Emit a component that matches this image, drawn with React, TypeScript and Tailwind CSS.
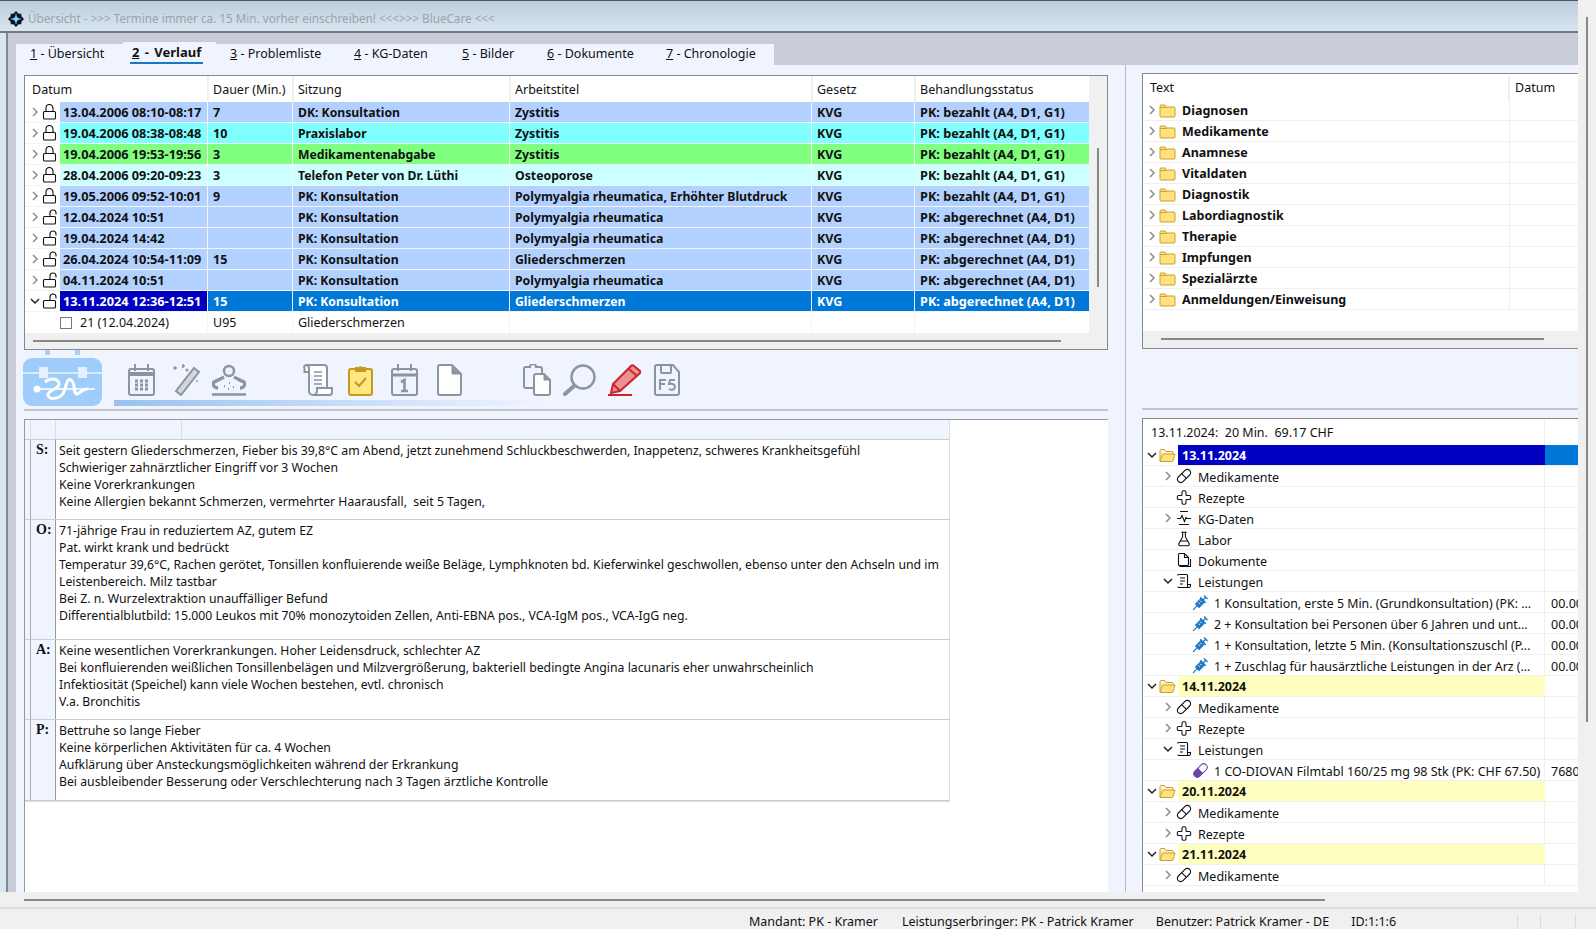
import { Pill, Cross, FlaskConical } from 'lucide-react';

const columns = ['w-[182px]', 'w-[85px]', 'w-[217px]', 'w-[302px]', 'w-[103px]', 'w-[175px]'];
const headers = ['Datum', 'Dauer (Min.)', 'Sitzung', 'Arbeitstitel', 'Gesetz', 'Behandlungsstatus'];
const cellText = ['', 'text-[12.5px]', 'text-[12.2px]', 'text-[12.25px]', 'text-[12.5px]', 'text-[12.7px]'];

const BLUE = 'bg-[#b3d1ff]';
const PAID = 'PK: bezahlt (A4, D1, G1)';
const BILLED = 'PK: abgerechnet (A4, D1)';

const visits = [
  { bg: BLUE, locked: true, cells: ['13.04.2006 08:10-08:17', '7', 'DK: Konsultation', 'Zystitis', 'KVG', PAID] },
  { bg: 'bg-[#80ffff]', locked: true, cells: ['19.04.2006 08:38-08:48', '10', 'Praxislabor', 'Zystitis', 'KVG', PAID] },
  { bg: 'bg-[#80ff80]', locked: true, cells: ['19.04.2006 19:53-19:56', '3', 'Medikamentenabgabe', 'Zystitis', 'KVG', PAID] },
  { bg: 'bg-[#ccffff]', locked: true, cells: ['28.04.2006 09:20-09:23', '3', 'Telefon Peter von Dr. Lüthi', 'Osteoporose', 'KVG', PAID] },
  { bg: BLUE, locked: true, cells: ['19.05.2006 09:52-10:01', '9', 'PK: Konsultation', 'Polymyalgia rheumatica, Erhöhter Blutdruck', 'KVG', PAID] },
  { bg: BLUE, locked: false, cells: ['12.04.2024 10:51', '', 'PK: Konsultation', 'Polymyalgia rheumatica', 'KVG', BILLED] },
  { bg: BLUE, locked: false, cells: ['19.04.2024 14:42', '', 'PK: Konsultation', 'Polymyalgia rheumatica', 'KVG', BILLED] },
  { bg: BLUE, locked: false, cells: ['26.04.2024 10:54-11:09', '15', 'PK: Konsultation', 'Gliederschmerzen', 'KVG', BILLED] },
  { bg: BLUE, locked: false, cells: ['04.11.2024 10:51', '', 'PK: Konsultation', 'Polymyalgia rheumatica', 'KVG', BILLED] },
];

const tabs = [
  { n: '1', label: 'Übersicht', cls: 'w-[107px] pl-[14px]' },
  { n: '2', label: 'Verlauf', cls: 'w-[93px] pl-[7px]', active: true },
  { n: '3', label: 'Problemliste', cls: 'w-[124px] pl-[14px]' },
  { n: '4', label: 'KG-Daten', cls: 'w-[108px] pl-[14px]' },
  { n: '5', label: 'Bilder', cls: 'w-[85px] pl-[14px]' },
  { n: '6', label: 'Dokumente', cls: 'w-[119px] pl-[14px]' },
  { n: '7', label: 'Chronologie', cls: 'w-[122px] pl-[14px]' },
];

const soap = [
  {
    label: 'S:',
    cls: 'h-[80px]',
    lines: [
      'Seit gestern Gliederschmerzen, Fieber bis 39,8°C am Abend, jetzt zunehmend Schluckbeschwerden, Inappetenz, schweres Krankheitsgefühl',
      'Schwieriger zahnärztlicher Eingriff vor 3 Wochen',
      'Keine Vorerkrankungen',
      'Keine Allergien bekannt Schmerzen, vermehrter Haarausfall,  seit 5 Tagen,',
    ],
  },
  {
    label: 'O:',
    cls: 'h-[120px]',
    lines: [
      '71-jährige Frau in reduziertem AZ, gutem EZ',
      'Pat. wirkt krank und bedrückt',
      'Temperatur 39,6°C, Rachen gerötet, Tonsillen konfluierende weiße Beläge, Lymphknoten bd. Kieferwinkel geschwollen, ebenso unter den Achseln und im',
      'Leistenbereich. Milz tastbar',
      'Bei Z. n. Wurzelextraktion unauffälliger Befund',
      'Differentialblutbild: 15.000 Leukos mit 70% monozytoiden Zellen, Anti-EBNA pos., VCA-IgM pos., VCA-IgG neg.',
    ],
  },
  {
    label: 'A:',
    cls: 'h-[80px]',
    lines: [
      'Keine wesentlichen Vorerkrankungen. Hoher Leidensdruck, schlechter AZ',
      'Bei konfluierenden weißlichen Tonsillenbelägen und Milzvergrößerung, bakteriell bedingte Angina lacunaris eher unwahrscheinlich',
      'Infektiosität (Speichel) kann viele Wochen bestehen, evtl. chronisch',
      'V.a. Bronchitis',
    ],
  },
  {
    label: 'P:',
    cls: 'h-[81px]',
    lines: [
      'Bettruhe so lange Fieber',
      'Keine körperlichen Aktivitäten für ca. 4 Wochen',
      'Aufklärung über Ansteckungsmöglichkeiten während der Erkrankung',
      'Bei ausbleibender Besserung oder Verschlechterung nach 3 Tagen ärztliche Kontrolle',
    ],
  },
];

const categories = ['Diagnosen', 'Medikamente', 'Anamnese', 'Vitaldaten', 'Diagnostik', 'Labordiagnostik', 'Therapie', 'Impfungen', 'Spezialärzte', 'Anmeldungen/Einweisung'];

type Node =
  | { kind: 'date'; label: string; selected?: boolean }
  | { kind: 'group'; label: string; icon: string; arrow?: 'right' | 'down' }
  | { kind: 'item'; label: string; value: string; capsule?: boolean };

const tree: Node[] = [
  { kind: 'date', label: '13.11.2024', selected: true },
  { kind: 'group', label: 'Medikamente', icon: 'pill', arrow: 'right' },
  { kind: 'group', label: 'Rezepte', icon: 'cross' },
  { kind: 'group', label: 'KG-Daten', icon: 'kg', arrow: 'right' },
  { kind: 'group', label: 'Labor', icon: 'flask' },
  { kind: 'group', label: 'Dokumente', icon: 'doc' },
  { kind: 'group', label: 'Leistungen', icon: 'list', arrow: 'down' },
  { kind: 'item', label: '1 Konsultation, erste 5 Min. (Grundkonsultation) (PK: ...', value: '00.00' },
  { kind: 'item', label: '2 + Konsultation bei Personen über 6 Jahren und unt...', value: '00.00' },
  { kind: 'item', label: '1 + Konsultation, letzte 5 Min. (Konsultationszuschl (P...', value: '00.00' },
  { kind: 'item', label: '1 + Zuschlag für hausärztliche Leistungen in der Arz (...', value: '00.00' },
  { kind: 'date', label: '14.11.2024' },
  { kind: 'group', label: 'Medikamente', icon: 'pill', arrow: 'right' },
  { kind: 'group', label: 'Rezepte', icon: 'cross', arrow: 'right' },
  { kind: 'group', label: 'Leistungen', icon: 'list', arrow: 'down' },
  { kind: 'item', label: '1 CO-DIOVAN Filmtabl 160/25 mg 98 Stk (PK: CHF 67.50)', value: '7680', capsule: true },
  { kind: 'date', label: '20.11.2024' },
  { kind: 'group', label: 'Medikamente', icon: 'pill', arrow: 'right' },
  { kind: 'group', label: 'Rezepte', icon: 'cross', arrow: 'right' },
  { kind: 'date', label: '21.11.2024' },
  { kind: 'group', label: 'Medikamente', icon: 'pill', arrow: 'right' },
];

function Chevron({ down, dark }: { down?: boolean; dark?: boolean }) {
  return (
    <svg width="10" height="10" viewBox="0 0 10 10" fill="none" stroke={dark ? '#222' : '#8c8c8c'} strokeWidth="1.5">
      {down ? <path d="M1 3l4 4 4-4" /> : <path d="M3 1l4 4-4 4" />}
    </svg>
  );
}

function Lock({ open }: { open?: boolean }) {
  return (
    <svg width="16" height="16" viewBox="0 0 16 16" fill="none" stroke="#111" strokeWidth="1.1">
      <rect x="1.5" y="7.5" width="12" height="7.5" rx="1" fill="#fff" />
      {open ? <path d="M8 7.5V4a3 3 0 0 1 6 0v1.5" /> : <path d="M4 7.5V4a3.5 3.5 0 0 1 7 0v3.5" />}
    </svg>
  );
}

function Folder({ open }: { open?: boolean }) {
  if (open) {
    return (
      <svg width="17" height="15" viewBox="0 0 17 15" stroke="#c9a02c" fill="#ffe17e">
        <path d="M1 13V2.5a1 1 0 0 1 1-1h3.5l1.5 2h6a1 1 0 0 1 1 1V6" fill="#fff3c4" />
        <path d="M1 13.5l2.5-7.5h12.5l-2 7a1 1 0 0 1-1 .5z" />
      </svg>
    );
  }
  return (
    <svg width="17" height="15" viewBox="0 0 17 15" stroke="#c9a02c" fill="#ffe17e">
      <path d="M1 3a1 1 0 0 1 1-1h4l1.5 2H15a1 1 0 0 1 1 1v8a1 1 0 0 1-1 1H2a1 1 0 0 1-1-1z" />
      <path d="M1 4.5h6.5" fill="none" />
    </svg>
  );
}

function GroupIcon({ name }: { name: string }) {
  if (name === 'pill') return <Pill size={18} strokeWidth={1.6} color="#111" />;
  if (name === 'cross') return <Cross size={17} strokeWidth={1.6} color="#111" />;
  if (name === 'flask') return <FlaskConical size={16} strokeWidth={1.6} color="#111" />;
  if (name === 'kg') {
    return (
      <svg width="16" height="16" viewBox="0 0 16 16" fill="none" stroke="#111" strokeWidth="1.1">
        <path d="M4 1.5h8M1 8.5h3.5l1.5-3 2.5 6 1.5-4 1 1h4M3 14.5h10" />
      </svg>
    );
  }
  if (name === 'doc') {
    return (
      <svg width="16" height="16" viewBox="0 0 16 16" fill="none" stroke="#111" strokeWidth="1.1">
        <path d="M2.5 2.5a1 1 0 0 1 1-1h5l4 4v7a1 1 0 0 1-1 1h-8a1 1 0 0 1-1-1zM8.5 1.5v4h4M14.5 7v7.5h-11" />
      </svg>
    );
  }
  return (
    <svg width="16" height="16" viewBox="0 0 16 16" fill="none" stroke="#111" strokeWidth="1.1">
      <path d="M1.5 2.5a1 1 0 0 1 1-1h8a1 1 0 0 1 1 1V13a1.5 1.5 0 0 0 3 0v-1.5h-3M13 14.5H3a1 1 0 0 1-1-1M4 5h5M4 8h5M4 11h3" />
    </svg>
  );
}

function SyringeIcon() {
  return (
    <svg width="17" height="17" viewBox="0 0 17 17" fill="none" stroke="#1f78c8">
      <g transform="rotate(45 8.5 8.5)">
        <path d="M8.5 19v-6" strokeWidth="1.2" />
        <rect x="6" y="5" width="5" height="8" fill="#1f78c8" />
        <path d="M4.5 5h8M8.5 5V1M6 1h5" strokeWidth="1.3" />
        <path d="M7 7.5h2M7 10h2" stroke="#fff" strokeWidth="0.9" />
      </g>
    </svg>
  );
}

function Capsule() {
  return (
    <svg width="17" height="17" viewBox="0 0 17 17">
      <g transform="rotate(-45 8.5 8.5)">
        <rect x="0.5" y="5" width="16" height="7" rx="3.5" fill="#fff" stroke="#6b46a8" />
        <path d="M8.5 5H4a3.5 3.5 0 0 0 0 7h4.5z" fill="#6b46a8" />
      </g>
    </svg>
  );
}

const G = '#8b959d';

function BagIcon() {
  return (
    <svg width="79" height="56" viewBox="0 0 79 56">
      <rect x="22" y="0" width="5" height="5" fill="#a8d2fb" />
      <rect x="52" y="0" width="5" height="5" fill="#a8d2fb" />
      <rect x="0" y="8" width="79" height="48" rx="9" fill="#9fcdfb" />
      <path d="M0 23h79" stroke="#eef5ff" strokeWidth="1.5" />
      <rect x="16" y="17" width="9" height="11" fill="#e4f0ff" />
      <rect x="55" y="17" width="9" height="11" fill="#e4f0ff" />
      <circle cx="14" cy="39" r="3.5" fill="#fff" />
      <path d="M14 39h58" stroke="#fff" strokeWidth="1.5" />
      <path d="M22 32c6-5 14-3 14 2s-11 6-11 11 10 4 14 0 4-18 9-15 2 15 6 14 6-6 11-5" fill="none" stroke="#fff" strokeWidth="3" />
    </svg>
  );
}

function CalendarIcon() {
  return (
    <svg width="27" height="32" viewBox="0 0 27 32" fill="none" stroke={G} strokeWidth="2">
      <rect x="1" y="5" width="25" height="26" rx="2" />
      <path d="M7 0v7M20 0v7" />
      <path d="M1 10h25" strokeWidth="4" />
      <path d="M7 17h3M12 17h3M17 17h3M7 21h3M12 21h3M17 21h3M7 25h3M12 25h3M17 25h3" strokeWidth="3" />
    </svg>
  );
}

function WandIcon() {
  return (
    <svg width="28" height="32" viewBox="0 0 28 32" fill="none">
      <path d="M22 4l5 4-18 23-5-4z" fill="#d4d8dc" stroke={G} strokeWidth="2" />
      <path d="M1 4h4M3 2v4M10 2h3M11 0v4" stroke={G} strokeWidth="1.5" />
      <circle cx="15" cy="6" r="1.5" fill={G} />
      <circle cx="25" cy="17" r="1" fill={G} />
    </svg>
  );
}

function PersonIcon() {
  return (
    <svg width="34" height="32" viewBox="0 0 34 32" fill="none" stroke={G}>
      <circle cx="17" cy="7" r="5" strokeWidth="2.4" fill="#eef2fb" />
      <path d="M12 13c-4 2-7 4-10 5-2 2 0 6 4 6M22 13c4 2 7 4 10 5 2 2 0 6-4 6" strokeWidth="3.4" />
      <path d="M12 22h1M17 19h1M21 23h1M16 25h1" strokeWidth="2" />
      <path d="M0 30.5h34" strokeWidth="2.4" />
    </svg>
  );
}

function ScrollIcon() {
  return (
    <svg width="30" height="32" viewBox="0 0 30 32" fill="none" stroke={G} strokeWidth="2">
      <path d="M1 4a3 3 0 0 1 3-3h17a3 3 0 0 1 3 3v20M6 8V4a3 3 0 0 0-3-3M6 8H1.5V4M6 8v19a4 4 0 0 0 4 4h16a3 3 0 0 0 3-4v-3H14v3a4 4 0 0 1-4 4" fill="#fff" />
      <path d="M11 8h8M11 12h8M11 16h8M11 20h8" strokeWidth="1.6" />
    </svg>
  );
}

function ClipboardIcon() {
  return (
    <svg width="25" height="32" viewBox="0 0 25 32" fill="none" stroke="#c29a20" strokeWidth="2">
      <rect x="1" y="5" width="23" height="26" rx="2" fill="#ffe680" />
      <path d="M8 7V4h3a2 2 0 0 1 3 0h3v3z" fill="#c29a20" />
      <path d="M7 18l4 4 7-8" strokeWidth="2.2" />
    </svg>
  );
}

function CalendarOneIcon() {
  return (
    <svg width="27" height="32" viewBox="0 0 27 32" fill="none" stroke={G} strokeWidth="2">
      <rect x="1" y="5" width="25" height="26" rx="2" />
      <path d="M7 0v7M20 0v7" />
      <path d="M1 11h25" strokeWidth="3" />
      <path d="M10 18l3.5-2v11M10 27h7" strokeWidth="2.6" />
    </svg>
  );
}

function DocIcon() {
  return (
    <svg width="25" height="32" viewBox="0 0 25 32" fill="#fff" stroke={G} strokeWidth="2">
      <path d="M1 3a2 2 0 0 1 2-2h12l9 9v19a2 2 0 0 1-2 2H3a2 2 0 0 1-2-2z" />
      <path d="M15 2v8h8" fill={G} strokeWidth="1" />
    </svg>
  );
}

function CopyIcon() {
  return (
    <svg width="28" height="32" viewBox="0 0 28 32" fill="none" stroke={G} strokeWidth="2">
      <path d="M10 24H3a2 2 0 0 1-2-2V5a2 2 0 0 1 2-2h4a3 3 0 0 1 6 0h4a2 2 0 0 1 2 2v4" />
      <path d="M11 12a2 2 0 0 1 2-2h8l6 6v13a2 2 0 0 1-2 2H13a2 2 0 0 1-2-2z" fill="#fff" />
      <path d="M21 10v6h6" fill={G} strokeWidth="1" />
    </svg>
  );
}

function SearchIcon() {
  return (
    <svg width="33" height="32" viewBox="0 0 33 32" fill="none" stroke={G}>
      <circle cx="20" cy="13" r="11.5" strokeWidth="2.4" />
      <path d="M11 22L2 30" strokeWidth="4" strokeLinecap="round" />
    </svg>
  );
}

function PencilIcon() {
  return (
    <svg width="34" height="32" viewBox="0 0 34 32" fill="none" stroke="#c9252c" strokeWidth="2">
      <path d="M26 2l6 5a2 2 0 0 1 0 2L12 27l-9 2 2-9L23 2a2 2 0 0 1 3 0z" fill="#ee8f92" />
      <path d="M21 5l8 7M5 20l7 7" />
      <path d="M0 31h24" strokeWidth="2" />
    </svg>
  );
}

function SaveIcon() {
  return (
    <svg width="26" height="32" viewBox="0 0 26 32" fill="none" stroke={G} strokeWidth="2">
      <path d="M1 3a2 2 0 0 1 2-2h16l6 7v21a2 2 0 0 1-2 2H3a2 2 0 0 1-2-2z" />
      <path d="M7 1v7a1 1 0 0 0 1 1h8a1 1 0 0 0 1-1V1" />
      <path d="M6 26v-10h6M6 20h5M21 16h-5l-1 4c4-1 6 1 6 3s-3 4-6 2" strokeWidth="2" />
    </svg>
  );
}

const toolbar = [
  { ml: 'ml-[26px]', el: <CalendarIcon /> },
  { ml: 'ml-[17px]', el: <WandIcon /> },
  { ml: 'ml-[12px]', el: <PersonIcon /> },
  { ml: 'ml-[57px]', el: <ScrollIcon /> },
  { ml: 'ml-[15px]', el: <ClipboardIcon /> },
  { ml: 'ml-[18px]', el: <CalendarOneIcon /> },
  { ml: 'ml-[19px]', el: <DocIcon /> },
  { ml: 'ml-[61px]', el: <CopyIcon /> },
  { ml: 'ml-[12px]', el: <SearchIcon /> },
  { ml: 'ml-[12px]', el: <PencilIcon /> },
  { ml: 'ml-[12px]', el: <SaveIcon /> },
];

function VisitRow({ visit, selected }: { visit: (typeof visits)[number]; selected?: boolean }) {
  return (
    <div className="flex h-[21px] border-b border-[#f4f4f4] font-bold leading-[19px]">
      <div className={`${columns[0]} flex shrink-0 items-center`}>
        <span className="ml-[3px] flex w-[14px] justify-center">
          <Chevron down={selected} dark={selected} />
        </span>
        <Lock open={!visit.locked} />
        <span className={`ml-[2px] h-[20px] flex-1 whitespace-pre pl-[3px] pt-px text-[12.75px] ${selected ? 'bg-[#0000c0] text-white' : visit.bg}`}>
          {visit.cells[0]}
        </span>
      </div>
      {visit.cells.slice(1).map((cell, i) => (
        <div
          key={i}
          className={`${columns[i + 1]} ${cellText[i + 1]} h-[20px] shrink-0 overflow-hidden whitespace-pre border-l border-[#f4f4f4] pl-[5px] pt-px ${selected ? 'bg-[#0078d7] text-white' : visit.bg}`}
        >
          {cell}
        </div>
      ))}
    </div>
  );
}

function TreeRow({ node }: { node: Node }) {
  if (node.kind === 'date') {
    return (
      <div className="flex h-[21px] border-b border-[#f0f0f0] font-bold leading-[19px]">
        <div className="flex w-[402px] shrink-0 items-center">
          <span className="ml-[3px] flex w-[12px] justify-center">
            <Chevron down dark />
          </span>
          <span className="ml-px flex w-[19px]">
            <Folder open />
          </span>
          <span className={`h-[20px] flex-1 pl-[4px] pt-px ${node.selected ? 'bg-[#0000c0] text-white' : 'bg-[#ffffc0]'}`}>{node.label}</span>
        </div>
        <div className={`h-[20px] flex-1 ${node.selected ? 'bg-[#0078d7]' : ''}`} />
      </div>
    );
  }
  if (node.kind === 'group') {
    return (
      <div className="flex h-[21px] border-b border-[#f0f0f0] leading-[20px]">
        <div className="flex w-[402px] shrink-0 items-center border-r border-[#f0f0f0]">
          <span className="ml-[19px] flex w-[12px] justify-center">
            {node.arrow && <Chevron down={node.arrow === 'down'} dark={node.arrow === 'down'} />}
          </span>
          <span className="ml-[2px] flex w-[16px] justify-center">
            <GroupIcon name={node.icon} />
          </span>
          <span className="ml-[6px] mt-[3px]">{node.label}</span>
        </div>
      </div>
    );
  }
  return (
    <div className="flex h-[21px] border-b border-[#f0f0f0] leading-[20px]">
      <div className="flex w-[402px] shrink-0 items-center border-r border-[#f0f0f0]">
        <span className="ml-[49px] flex w-[17px] justify-center">
          {node.capsule ? <Capsule /> : <SyringeIcon />}
        </span>
        <span className={`ml-[5px] mt-[3px] whitespace-pre ${node.capsule ? 'text-[12.5px]' : 'text-[12.35px]'}`}>{node.label}</span>
      </div>
      <div className="ml-[6px] flex-1 whitespace-pre pt-[2px]">{node.value}</div>
    </div>
  );
}

export default function App() {
  return (
    <div className="flex h-[929px] w-[1596px] flex-col overflow-hidden bg-[#f0f0f0] font-['Noto_Sans',sans-serif] text-[12.5px] text-[#111]">
      <div className="flex h-[892px] shrink-0">
        <div className="flex w-[1578px] shrink-0 flex-col">
          <div className="flex h-[33px] shrink-0 items-center border-t border-b-2 border-t-[#555] border-b-[#777] bg-gradient-to-b from-[#bccddb] to-[#d8e6f3] pl-[8px] pt-[6px]">
            <svg width="16" height="16" viewBox="0 0 18 18" className="shrink-0">
              <path d="M9 0l3 3 3 0 0 3 3 3-3 3 0 3-3 0-3 3-3-3-3 0 0-3-3-3 3-3 0-3 3 0z" fill="#0a0f22" />
              <path d="M9 5l4 4-4 4-4-4z" fill="#3fa8e8" />
              <path d="M3 9h12M9 3v12" stroke="#e8f4ff" strokeWidth="0.8" />
            </svg>
            <span className="ml-[4px] text-[11.7px] text-[#9ba3ab]">Übersicht - &gt;&gt;&gt; Termine immer ca. 15 Min. vorher einschreiben! &lt;&lt;&lt;&gt;&gt;&gt; BlueCare &lt;&lt;&lt;</span>
          </div>
          <div className="flex min-h-0 flex-1">
            <div className="w-[6px] shrink-0 bg-[#d8e6f3]" />
            <div className="flex min-w-0 flex-1 flex-col border-l-2 border-[#888] bg-[#c8ccd8] pl-[8px]">
              <div className="flex h-[32px] shrink-0 items-end">
                {tabs.map((tab) => (
                  <div
                    key={tab.n}
                    className={`${tab.cls} ${tab.active ? 'h-[23px] text-[13px] font-bold [word-spacing:2px]' : 'h-[21px]'} bg-[#f0f4ff] leading-[20px]`}
                  >
                    <span className={tab.active ? 'inline-block h-[22px] border-b-2 border-[#1878c8] px-[2px]' : ''}>
                      <span className="underline">{tab.n}</span> - {tab.label}
                    </span>
                  </div>
                ))}
              </div>
              <div className="flex min-h-0 flex-1 bg-[#f0f4ff] pl-[8px]">
                <div className="flex w-[1084px] shrink-0 flex-col">
                  <div className="mt-[10px] h-[275px] shrink-0 border border-[#888] bg-[#f0f0f0]">
                    <div className="flex">
                      <div className="w-[1064px] shrink-0 bg-white">
                        <div className="flex h-[26px] items-center">
                          {headers.map((h, i) => (
                            <div key={h} className={`${columns[i]} flex h-[26px] shrink-0 items-center pt-[2px] ${i > 0 ? 'border-l-2 border-[#f0f0f0] pl-[4px]' : 'pl-[7px]'}`}>
                              {h}
                            </div>
                          ))}
                        </div>
                        {visits.map((v) => (
                          <VisitRow key={v.cells[0]} visit={v} />
                        ))}
                        <VisitRow
                          selected
                          visit={{ bg: BLUE, locked: false, cells: ['13.11.2024 12:36-12:51', '15', 'PK: Konsultation', 'Gliederschmerzen', 'KVG', BILLED] }}
                        />
                        <div className="flex h-[21px] pt-px leading-[20px]">
                          <div className={`${columns[0]} flex shrink-0 items-center pl-[35px]`}>
                            <span className="h-[12px] w-[12px] border border-[#777]" />
                            <span className="ml-[8px]">21 (12.04.2024)</span>
                          </div>
                          <div className={`${columns[1]} shrink-0 border-l border-[#f4f4f4] pl-[5px]`}>U95</div>
                          <div className={`${columns[2]} shrink-0 border-l border-[#f4f4f4] pl-[5px]`}>Gliederschmerzen</div>
                          <div className={`${columns[3]} shrink-0 border-l border-[#f4f4f4]`} />
                          <div className={`${columns[4]} shrink-0 border-l border-[#f4f4f4]`} />
                          <div className={`${columns[5]} shrink-0 border-l border-[#f4f4f4]`} />
                        </div>
                      </div>
                      <div className="flex flex-1 justify-center pt-[72px]">
                        <div className="h-[139px] w-[2px] bg-[#888]" />
                      </div>
                    </div>
                    <div className="ml-[8px] mt-[7px] h-[2px] w-[1028px] bg-[#888]" />
                  </div>
                  <div className="flex h-[61px] shrink-0 border-b-2 border-[#c4c6cc]">
                    <div className="-ml-px shrink-0">
                      <BagIcon />
                    </div>
                    <div className="flex-1">
                      <div className="flex h-[50px] items-start pt-[14px]">
                        {toolbar.map((t, i) => (
                          <div key={i} className={`${t.ml} shrink-0`}>
                            {t.el}
                          </div>
                        ))}
                      </div>
                      <div className="ml-[12px] h-[6px] w-[432px] bg-gradient-to-r from-[#98c2ee] to-[#f0f4ff]" />
                    </div>
                  </div>
                  <div className="mt-[8px] min-h-0 flex-1 border-l border-t border-[#999] bg-white">
                    <div className="w-[925px] border-b border-r border-[#ddd]">
                      <div className="flex h-[20px] border-b border-[#ccc] bg-[#f0f4ff]">
                        <div className="w-[6px] border-r border-[#ddd]" />
                        <div className="w-[25px] border-r border-[#ddd]" />
                        <div className="w-[126px] border-r border-[#ddd]" />
                      </div>
                      {soap.map((block) => (
                        <div key={block.label} className={`${block.cls} flex border-b border-[#ccc]`}>
                          <div className="w-[6px] shrink-0 border-r border-[#aaa] bg-[#f0f4ff]" />
                          <div className="w-[25px] shrink-0 border-r border-[#999] bg-[#f0f4ff] pl-[5px] pt-[1px] font-['Liberation_Serif',serif] text-[14px] font-bold leading-[18px]">
                            {block.label}
                          </div>
                          <div className="flex-1 pl-[3px] pt-[2px] text-[12.26px] leading-[17px]">
                            {block.lines.map((line, i) => (
                              <div key={i} className="whitespace-pre">
                                {line}
                              </div>
                            ))}
                          </div>
                        </div>
                      ))}
                    </div>
                  </div>
                </div>
                <div className="ml-[17px] w-px shrink-0 bg-[#bbb]" />
                <div className="ml-[16px] flex min-w-0 flex-1 flex-col">
                  <div className="mt-[8px] flex h-[276px] shrink-0 flex-col border-y border-l border-[#888] bg-[#f0f0f0]">
                    <div className="h-[257px] bg-white">
                      <div className="flex h-[26px] items-center pt-[2px]">
                        <div className="flex h-full w-[367px] items-center border-r-2 border-[#f0f0f0] pl-[7px]">Text</div>
                        <div className="pl-[5px]">Datum</div>
                      </div>
                      {categories.map((c) => (
                        <div key={c} className="flex h-[21px] items-center border-b border-[#f0f0f0] font-bold">
                          <div className="flex h-full w-[367px] items-center border-r border-[#f0f0f0]">
                            <span className="ml-[3px] flex w-[12px] justify-center">
                              <Chevron />
                            </span>
                            <span className="ml-px flex w-[19px]">
                              <Folder />
                            </span>
                            <span className="ml-[4px] mt-[2px]">{c}</span>
                          </div>
                        </div>
                      ))}
                    </div>
                    <div className="ml-[18px] mt-[7px] h-[2px] w-[383px] bg-[#888]" />
                  </div>
                  <div className="h-[61px] shrink-0 border-b-2 border-[#c4c6cc]" />
                  <div className="mt-[8px] min-h-0 flex-1 overflow-hidden border-l border-t border-[#888] bg-white">
                    <div className="flex h-[26px] items-center">
                      <div className="flex h-full w-[402px] items-center whitespace-pre border-r border-[#f0f0f0] pl-[8px] pt-[3px]">13.11.2024:  20 Min.  69.17 CHF</div>
                    </div>
                    {tree.map((node, i) => (
                      <TreeRow key={i} node={node} />
                    ))}
                  </div>
                </div>
              </div>
            </div>
          </div>
        </div>
        <div className="flex-1 pl-[8px] pt-[17px]">
          <div className="h-[705px] w-[2px] bg-[#888]" />
        </div>
      </div>
      <div className="h-[17px] shrink-0 border-b-2 border-[#dcdcdc] pl-[24px] pt-[7px]">
        <div className="h-[2px] w-[1301px] bg-[#888]" />
      </div>
      <div className="flex h-[20px] shrink-0 items-center pt-[6px]">
        <span className="ml-[749px]">Mandant: PK - Kramer</span>
        <span className="ml-[24px]">Leistungserbringer: PK - Patrick Kramer</span>
        <span className="ml-[22px]">Benutzer: Patrick Kramer - DE</span>
        <span className="ml-[22px]">ID:1:1:6</span>
        <span className="ml-auto h-full w-[23px] border-l border-[#dcdcdc]" />
        <span className="h-full w-[35px] border-l border-[#dcdcdc]" />
        <span className="h-full w-[21px] border-l border-[#dcdcdc]" />
      </div>
    </div>
  );
}
